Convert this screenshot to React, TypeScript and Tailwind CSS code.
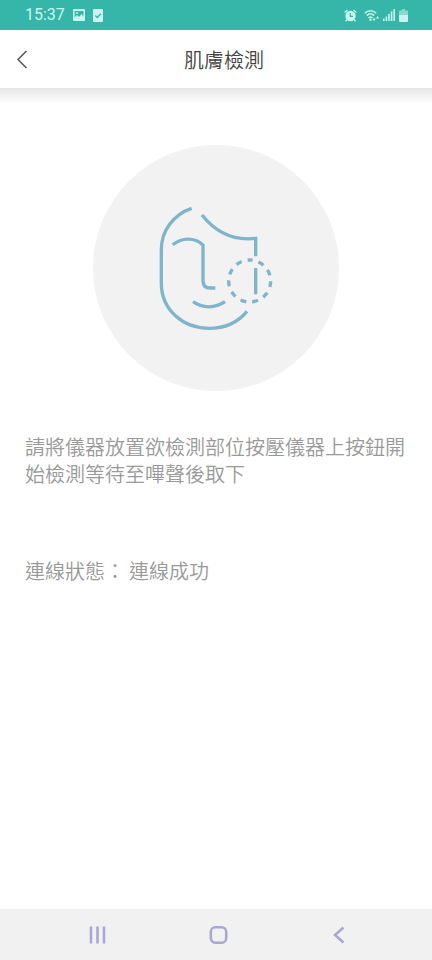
function StatusBar() {
  return (
    <div className="flex h-[30px] shrink-0 items-center justify-between bg-[#36b5a9] pr-6 pl-[25px] text-[#c8f5ef]">
      <div className="flex items-center gap-2">
        <span className="font-[Roboto,sans-serif] text-base leading-5">15:37</span>
        <svg className="h-3 w-3" viewBox="0 0 12 12" aria-hidden="true">
          <path fillRule="evenodd" fill="currentColor" d="M1 0h10a1 1 0 0 1 1 1v10a1 1 0 0 1-1 1H1a1 1 0 0 1-1-1V1a1 1 0 0 1 1-1Zm.6 2v6.500L4 6l2 2 2.400-3 2 2.500V2Z" />
          <circle cx="4" cy="4" r="1" fill="currentColor" />
        </svg>
        <svg className="h-[13px] w-[10px]" viewBox="0 0 10 13" aria-hidden="true">
          <rect width="10" height="13" rx="1" fill="currentColor" />
          <path d="M2.300 6.400 4.300 8.400 7.800 4.800" fill="none" stroke="#36b5a9" strokeWidth="1.400" />
        </svg>
      </div>
      <div className="flex items-center gap-1">
        <svg className="h-[13px] w-[13px]" viewBox="0 0 13 13" aria-hidden="true">
          <circle cx="6.500" cy="7" r="5.200" fill="currentColor" />
          <path d="M.6 3.600 3.500 1M12.400 3.600 9.500 1M2.800 10.800 1.600 12.300M10.200 10.800 11.400 12.300" stroke="currentColor" strokeWidth="1.400" />
          <path d="M6.300 4v3.300h2.700" fill="none" stroke="#36b5a9" strokeWidth="1.200" />
        </svg>
        <div className="flex items-center gap-[3px] pl-[3px]">
          <svg className="h-[13px] w-4" viewBox="0 0 16 13" aria-hidden="true">
            <g fill="none" stroke="currentColor" strokeWidth="1.500">
              <path d="M.8 4.200C4 1 9 1 12.200 4.200M2.800 6.600c2.200-2.100 5.200-2.100 7.400 0M4.600 8.800c1.200-1 2.600-1 3.800 0" />
            </g>
            <circle cx="6.500" cy="10.800" r="1.200" fill="currentColor" />
            <path d="M8.500 9.600h3.200L10.100 12.200ZM12 9.600h3.200L13.600 7Z" fill="currentColor" />
          </svg>
          <svg className="h-3 w-3" viewBox="0 0 12 12" aria-hidden="true">
            <path d="M0 9.500h1.600V12H0ZM2.600 7.500h1.600V12H2.600ZM5.200 5h1.600v7H5.200ZM7.800 2.500h1.600V12H7.800ZM10.400 0H12v12h-1.600Z" fill="currentColor" />
          </svg>
        </div>
        <svg className="h-[13px] w-[9px]" viewBox="0 0 9 13" aria-hidden="true">
          <path d="M3 0h3v1.400h2a1 1 0 0 1 1 1V6H0V2.400a1 1 0 0 1 1-1h2Z" fill="#8ad8cf" />
          <path d="M0 6h9v6a1 1 0 0 1-1 1H1a1 1 0 0 1-1-1Z" fill="currentColor" />
        </svg>
      </div>
    </div>
  );
}

function FaceIcon() {
  return (
    <svg className="h-36 w-[134px]" viewBox="-3 0 402 432" fill="none" stroke="#7fb5ca" strokeWidth="10" role="img" aria-label="臉部">
      <path d="M125 37C72 55 34 103 34 160V262C34 340 97 397 177 397C222 397 263 380 291 346" />
      <path d="M156 57C190 100 242 136 317 127V181M317 216V295" />
      <path d="M68 146C96 125 132 122 159 147V254Q159 276 181 276H196" />
      <path d="M129 317C157 337 195 338 225 317" />
      <circle cx="299" cy="255" r="63" strokeDasharray="18 17.985" strokeDashoffset="9" transform="rotate(-90 299 255)" />
    </svg>
  );
}

export default function App() {
  return (
    <div className="flex min-h-screen flex-col bg-white font-['Noto_Sans_CJK_TC',sans-serif]">
      <StatusBar />
      <header className="grid h-[58px] shrink-0 grid-cols-[48px_1fr_32px] items-center">
        <button type="button" aria-label="返回" className="flex h-full items-center pl-4 text-[#555555]">
          <svg className="h-5 w-3" viewBox="0 0 12 20" fill="none" stroke="currentColor" strokeWidth="1.500" aria-hidden="true">
            <path d="M10.500 2 2 10.500 10.500 19" />
          </svg>
        </button>
        <h1 className="pt-0.5 text-center text-xl font-[350] text-[#444444]">肌膚檢測</h1>
      </header>
      <div className="h-4 shrink-0 bg-linear-to-b from-[#e6e6e6] to-white" />
      <main className="flex grow flex-col px-[25px] pt-[41px] text-xl leading-[27px] font-[350] text-[#999999]">
        <div className="flex size-[246px] items-center justify-center self-center rounded-full bg-[#f2f2f2]">
          <FaceIcon />
        </div>
        <p className="mt-[42px]">請將儀器放置欲檢測部位按壓儀器上按鈕開始檢測等待至嗶聲後取下</p>
        <p className="mt-[70px] flex gap-1">
          <span>連線狀態：</span>
          <span>連線成功</span>
        </p>
      </main>
      <nav className="flex h-[51px] shrink-0 items-center justify-between bg-[#f1f1f1] pr-[78px] pl-[84px] text-[#a9a7d6]">
        <button type="button" aria-label="最近使用" className="flex w-7 justify-center">
          <svg className="h-5 w-5" viewBox="0 0 20 20" fill="none" stroke="currentColor" strokeWidth="2.600" aria-hidden="true">
            <path d="M3 1.500v17M9.500 1.500v17M16 1.500v17" />
          </svg>
        </button>
        <button type="button" aria-label="主畫面" className="flex w-7 justify-center">
          <svg className="h-5 w-5" viewBox="0 0 20 20" fill="none" stroke="currentColor" strokeWidth="2.600" aria-hidden="true">
            <rect x="1.800" y="2.300" width="15.400" height="15.400" rx="4.500" />
          </svg>
        </button>
        <button type="button" aria-label="上一頁" className="flex w-7 justify-center">
          <svg className="h-5 w-5" viewBox="0 0 20 20" fill="none" stroke="currentColor" strokeWidth="2.600" aria-hidden="true">
            <path d="M13.500 2.500 5 10l8.500 7.500" />
          </svg>
        </button>
      </nav>
    </div>
  );
}
